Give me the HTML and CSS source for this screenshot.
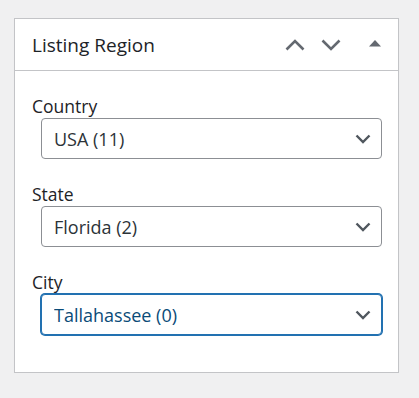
FILE: index.html
```html
<!DOCTYPE html>
<html lang="en">
<head>
  <meta charset="UTF-8">
  <title>Listing Region</title>
  <link rel="stylesheet" href="styles.css">
</head>
<body>
  <div class="postbox">
    <div class="postbox-header">
      <h2>Listing Region</h2>
      <div class="handle-actions">
        <button class="handle" aria-label="Move up">
          <svg width="20" height="12" viewBox="0 0 20 12"><path d="M1.5 10.5 L10 2 L18.5 10.5" fill="none" stroke="currentColor" stroke-width="2.6"/></svg>
        </button>
        <button class="handle" aria-label="Move down">
          <svg width="20" height="12" viewBox="0 0 20 12"><path d="M1.5 1.5 L10 10 L18.5 1.5" fill="none" stroke="currentColor" stroke-width="2.6"/></svg>
        </button>
        <button class="handle toggle" aria-label="Toggle panel">
          <svg width="12" height="7" viewBox="0 0 12 7"><path d="M0 6.5 L6 0 L12 6.5 Z" fill="currentColor"/></svg>
        </button>
      </div>
    </div>

    <div class="inside">
      <div class="field">
        <label for="country">Country</label>
        <div class="select-wrap">
          <select id="country">
            <option>USA (11)</option>
          </select>
          <svg class="arrow" width="16" height="10" viewBox="0 0 16 10"><path d="M1.5 1.5 L8 8 L14.5 1.5" fill="none" stroke="currentColor" stroke-width="2.4"/></svg>
        </div>
      </div>

      <div class="field">
        <label for="state">State</label>
        <div class="select-wrap">
          <select id="state">
            <option>Florida (2)</option>
          </select>
          <svg class="arrow" width="16" height="10" viewBox="0 0 16 10"><path d="M1.5 1.5 L8 8 L14.5 1.5" fill="none" stroke="currentColor" stroke-width="2.4"/></svg>
        </div>
      </div>

      <div class="field">
        <label for="city">City</label>
        <div class="select-wrap">
          <select id="city" class="focused">
            <option>Tallahassee (0)</option>
          </select>
          <svg class="arrow" width="16" height="10" viewBox="0 0 16 10"><path d="M1.5 1.5 L8 8 L14.5 1.5" fill="none" stroke="currentColor" stroke-width="2.4"/></svg>
        </div>
      </div>
    </div>
  </div>
</body>
</html>
```

FILE: styles.css
```css
body {
  margin: 0;
  padding: 18px 20px 0 14px;
  background: #f0f0f1;
  font-family: "Open Sans", "Noto Sans", sans-serif;
  color: #1d2327;
}
.postbox {
  width: 385px;
  background: #fff;
  border: 1px solid #c3c4c7;
  box-shadow: 0 1px 1px rgba(0,0,0,0.04);
  box-sizing: border-box;
}
.postbox-header {
  display: flex;
  align-items: center;
  justify-content: space-between;
  height: 52px;
  border-bottom: 1px solid #c3c4c7;
  box-sizing: border-box;
  padding: 0 5px 0 17px;
}
.postbox-header h2 {
  margin: 0;
  font-size: 19px;
  font-weight: 400;
  padding-top: 1px;
}
.handle-actions {
  display: flex;
  align-items: center;
}
.handle {
  background: none;
  border: none;
  padding: 0;
  color: #646970;
  width: 36px;
  height: 30px;
  display: flex;
  align-items: center;
  justify-content: center;
}
.handle.toggle {
  margin-left: 8px;
  padding-bottom: 3px;
}
.inside {
  padding: 23px 16px 37px 17px;
}
.field + .field {
  margin-top: 23px;
}
.field label {
  display: block;
  font-size: 17.5px;
  line-height: 24px;
}
.select-wrap {
  position: relative;
  margin-left: 9px;
}
.select-wrap select {
  appearance: none;
  -webkit-appearance: none;
  width: 100%;
  height: 41px;
  padding: 0 40px 0 12px;
  font-family: inherit;
  font-size: 18px;
  color: #2c3338;
  background: #fff;
  border: 1px solid #8c8f94;
  border-radius: 4px;
  box-sizing: border-box;
  outline: none;
}
.select-wrap select.focused {
  border-color: #2271b1;
  box-shadow: 0 0 0 1px #2271b1;
  color: #0a4b78;
}
.arrow {
  position: absolute;
  right: 11px;
  top: 16px;
  color: #50575e;
  pointer-events: none;
}
```
